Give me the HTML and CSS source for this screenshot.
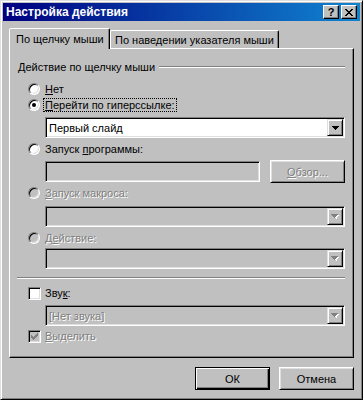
FILE: index.html
```html
<!doctype html>
<html lang="ru">
<head>
    <meta charset="UTF-8">
    <title>Настройка действия</title>
    <link rel="stylesheet" href="styles.css">
</head>
<body>
<div class="window">
    <div class="titlebar">
        <span class="title">Настройка действия</span>
        <div class="title-btns">
            <span class="tbtn">?</span>
            <span class="tbtn">
                <svg width="8" height="7" viewBox="0 0 8 7" shape-rendering="crispEdges">
                    <path d="M0 0h2v1h-2zM6 0h2v1h-2zM1 1h2v1h-2zM5 1h2v1h-2zM2 2h4v1h-4zM3 3h2v1h-2zM2 4h4v1h-4zM1 5h2v1h-2zM5 5h2v1h-2zM0 6h2v1h-2zM6 6h2v1h-2z" fill="#000"/>
                </svg>
            </span>
        </div>
    </div>
    <div class="client">
        <div class="tabs">
            <div class="tab active">По щелчку мыши</div>
            <div class="tab second">По наведении указателя мыши</div>
        </div>
        <div class="panel">
            <div class="group-head">
                <span>Действие по щелчку мыши</span>
                <span class="rule"></span>
            </div>

            <div class="opt first">
                <span class="radio"></span>
                <span class="lbl"><u>Н</u>ет</span>
            </div>
            <div class="opt">
                <span class="radio checked"></span>
                <span class="lbl focus"><u>П</u>ерейти по гиперссылке:</span>
            </div>
            <div class="combo field m4">
                <span class="combo-text">Первый слайд</span>
                <span class="drop">
                    <svg width="7" height="4" viewBox="0 0 7 4" shape-rendering="crispEdges"><path d="M0 0h7v1h-7zM1 1h5v1h-5zM2 2h3v1h-3zM3 3h1v1h-1z" fill="#000"/></svg>
                </span>
            </div>

            <div class="opt m3">
                <span class="radio"></span>
                <span class="lbl">Запуск <u>п</u>рограммы:</span>
            </div>
            <div class="field-row m3">
                <span class="textbox disabled"></span>
                <span class="btn browse"><span class="off"><u>О</u>бзор...</span></span>
            </div>

            <div class="opt m2">
                <span class="radio disabled"></span>
                <span class="lbl off"><u>З</u>апуск макроса:</span>
            </div>
            <div class="combo field disabled m5">
                <span class="combo-text"></span>
                <span class="drop">
                    <svg width="8" height="5" viewBox="0 0 8 5" shape-rendering="crispEdges"><path d="M2 1h6v1h-6zM3 2h4v1h-4zM4 3h2v1h-2zM5 4h1v1h-1z" fill="#fff"/><path d="M0 0h7v1h-7zM1 1h5v1h-5zM2 2h3v1h-3zM3 3h1v1h-1z" fill="#808080"/></svg>
                </span>
            </div>

            <div class="opt m3">
                <span class="radio disabled"></span>
                <span class="lbl off">Д<u>е</u>йствие:</span>
            </div>
            <div class="combo field disabled m2">
                <span class="combo-text"></span>
                <span class="drop">
                    <svg width="8" height="5" viewBox="0 0 8 5" shape-rendering="crispEdges"><path d="M2 1h6v1h-6zM3 2h4v1h-4zM4 3h2v1h-2zM5 4h1v1h-1z" fill="#fff"/><path d="M0 0h7v1h-7zM1 1h5v1h-5zM2 2h3v1h-3zM3 3h1v1h-1z" fill="#808080"/></svg>
                </span>
            </div>

            <div class="sep"></div>

            <div class="opt m6">
                <span class="check"></span>
                <span class="lbl">Зву<u>к</u>:</span>
            </div>
            <div class="combo field disabled m4">
                <span class="combo-text off">[Нет звука]</span>
                <span class="drop">
                    <svg width="8" height="5" viewBox="0 0 8 5" shape-rendering="crispEdges"><path d="M2 1h6v1h-6zM3 2h4v1h-4zM4 3h2v1h-2zM5 4h1v1h-1z" fill="#fff"/><path d="M0 0h7v1h-7zM1 1h5v1h-5zM2 2h3v1h-3zM3 3h1v1h-1z" fill="#808080"/></svg>
                </span>
            </div>

            <div class="opt m2">
                <span class="check disabled">
                    <svg width="7" height="7" viewBox="0 0 7 7" shape-rendering="crispEdges"><path d="M6 0h1v3h-1zM5 1h1v3h-1zM4 2h1v3h-1zM3 3h1v3h-1zM2 4h1v3h-1zM1 3h1v3h-1zM0 2h1v3h-1z" fill="#808080"/></svg>
                </span>
                <span class="lbl off"><u>В</u>ыделить</span>
            </div>
        </div>
        <div class="buttons">
            <span class="btn default">ОК</span>
            <span class="btn">Отмена</span>
        </div>
    </div>
</div>
</body>
</html>
```

FILE: styles.css
```css
body {
    margin: 0;
    font-family: "Liberation Sans", Arial, sans-serif;
    font-size: 11px;
    color: #000;
    background-color: #c0c0c0;
}
u {
    text-decoration: underline;
    text-underline-offset: 1px;
}
.window {
    width: 363px;
    height: 400px;
    box-sizing: border-box;
    border: 1px solid;
    border-color: #dfdfdf #000 #000 #dfdfdf;
    box-shadow: inset 1px 1px #fff, inset -1px -1px #808080;
    padding: 2px;
    background-color: #c0c0c0;
}
.titlebar {
    height: 18px;
    display: flex;
    align-items: center;
    justify-content: space-between;
    padding: 0 3px;
    background: linear-gradient(to right, #000080, #1084d0);
    color: #fff;
}
.title {
    font-weight: bold;
    font-size: 12px;
}
.title-btns {
    display: flex;
    gap: 2px;
}
.tbtn {
    width: 16px;
    height: 14px;
    box-sizing: border-box;
    display: flex;
    align-items: center;
    justify-content: center;
    background-color: #c0c0c0;
    border: 1px solid;
    border-color: #fff #000 #000 #fff;
    box-shadow: inset -1px -1px #808080;
    color: #000;
    font-weight: bold;
    font-size: 11px;
    line-height: 1;
}

.client {
    padding: 7px 6px 0 6px;
}
.tabs {
    display: flex;
    align-items: flex-end;
    height: 20px;
}
.tab {
    height: 18px;
    box-sizing: border-box;
    display: flex;
    align-items: center;
    white-space: nowrap;
    border: 1px solid;
    border-bottom: none;
    border-color: #fff #000 transparent #fff;
    box-shadow: inset -1px 0 #808080;
    border-radius: 2px 2px 0 0;
    padding: 0 4px;
}
.tab.active {
    width: 101px;
    height: 21px;
    margin-bottom: -1px;
    padding: 0 0 1px 6px;
    position: relative;
    z-index: 1;
    background-color: #c0c0c0;
}
.tab.second {
    width: 169px;
    border-left-color: #fff;
}
.panel {
    height: 310px;
    box-sizing: border-box;
    border: 1px solid;
    border-color: #fff #000 #000 #fff;
    box-shadow: inset -1px -1px #808080;
    padding: 0 8px;
}

.group-head {
    margin-top: 11px;
    height: 13px;
    display: flex;
    align-items: center;
}
.rule {
    flex: 1;
    margin-left: 4px;
    border-top: 1px solid #808080;
    border-bottom: 1px solid #fff;
}
.opt {
    height: 16px;
    display: flex;
    align-items: center;
    padding-left: 10px;
}
.opt.first { margin-top: 8px; }
.m2 { margin-top: 2px; }
.m3 { margin-top: 3px; }
.m4 { margin-top: 4px; }
.m5 { margin-top: 5px; }
.m6 { margin-top: 6px; }

.lbl {
    border: 1px dotted transparent;
    padding: 0 1px;
    line-height: 12px;
}
.lbl.focus {
    border-color: #000;
}
.off {
    color: #808080;
    text-shadow: 1px 1px 0 #fff;
}

.radio {
    width: 12px;
    height: 12px;
    box-sizing: border-box;
    flex: none;
    margin-right: 3px;
    border-radius: 50%;
    border: 1px solid;
    border-color: #808080 #fff #fff #808080;
    box-shadow: inset 1px 1px #000, inset -1px -1px #dfdfdf;
    background-color: #fff;
    display: flex;
    align-items: center;
    justify-content: center;
}
.radio.disabled {
    background-color: #c0c0c0;
}
.radio.checked::after {
    content: "";
    width: 4px;
    height: 4px;
    border-radius: 50%;
    background-color: #000;
}
.check {
    width: 13px;
    height: 13px;
    box-sizing: border-box;
    flex: none;
    margin-right: 2px;
    border: 1px solid;
    border-color: #808080 #fff #fff #808080;
    box-shadow: inset 1px 1px #000, inset -1px -1px #dfdfdf;
    background-color: #fff;
    display: flex;
    align-items: center;
    justify-content: center;
}
.check.disabled {
    background-color: #c0c0c0;
}

.field {
    margin-left: 27px;
}
.combo {
    height: 21px;
    box-sizing: border-box;
    display: flex;
    align-items: center;
    padding: 1px;
    border: 1px solid;
    border-color: #808080 #fff #fff #808080;
    box-shadow: inset 1px 1px #000, inset -1px -1px #dfdfdf;
    background-color: #fff;
}
.combo.disabled {
    background-color: #c0c0c0;
}
.combo-text {
    flex: 1;
    padding-left: 2px;
}
.drop {
    width: 16px;
    height: 17px;
    box-sizing: border-box;
    flex: none;
    display: flex;
    align-items: center;
    justify-content: center;
    background-color: #c0c0c0;
    border: 1px solid;
    border-color: #dfdfdf #000 #000 #dfdfdf;
    box-shadow: inset 1px 1px #fff, inset -1px -1px #808080;
}

.field-row {
    margin-left: 27px;
    height: 23px;
    display: flex;
    align-items: center;
    gap: 10px;
}
.textbox {
    flex: 1;
    height: 21px;
    box-sizing: border-box;
    border: 1px solid;
    border-color: #808080 #fff #fff #808080;
    box-shadow: inset 1px 1px #000, inset -1px -1px #dfdfdf;
    background-color: #c0c0c0;
}

.btn {
    width: 75px;
    height: 23px;
    box-sizing: border-box;
    display: flex;
    align-items: center;
    justify-content: center;
    background-color: #c0c0c0;
    border: 1px solid;
    border-color: #fff #000 #000 #fff;
    box-shadow: inset 1px 1px #dfdfdf, inset -1px -1px #808080;
}
.btn.default {
    border-color: #000;
    box-shadow: inset 1px 1px #fff, inset -1px -1px #000, inset -2px -2px #808080;
}

.sep {
    margin: 8px 0 0 -1px;
    border-top: 1px solid #808080;
    border-bottom: 1px solid #fff;
}
.buttons {
    margin-top: 9px;
    display: flex;
    justify-content: flex-end;
    gap: 9px;
}
```
